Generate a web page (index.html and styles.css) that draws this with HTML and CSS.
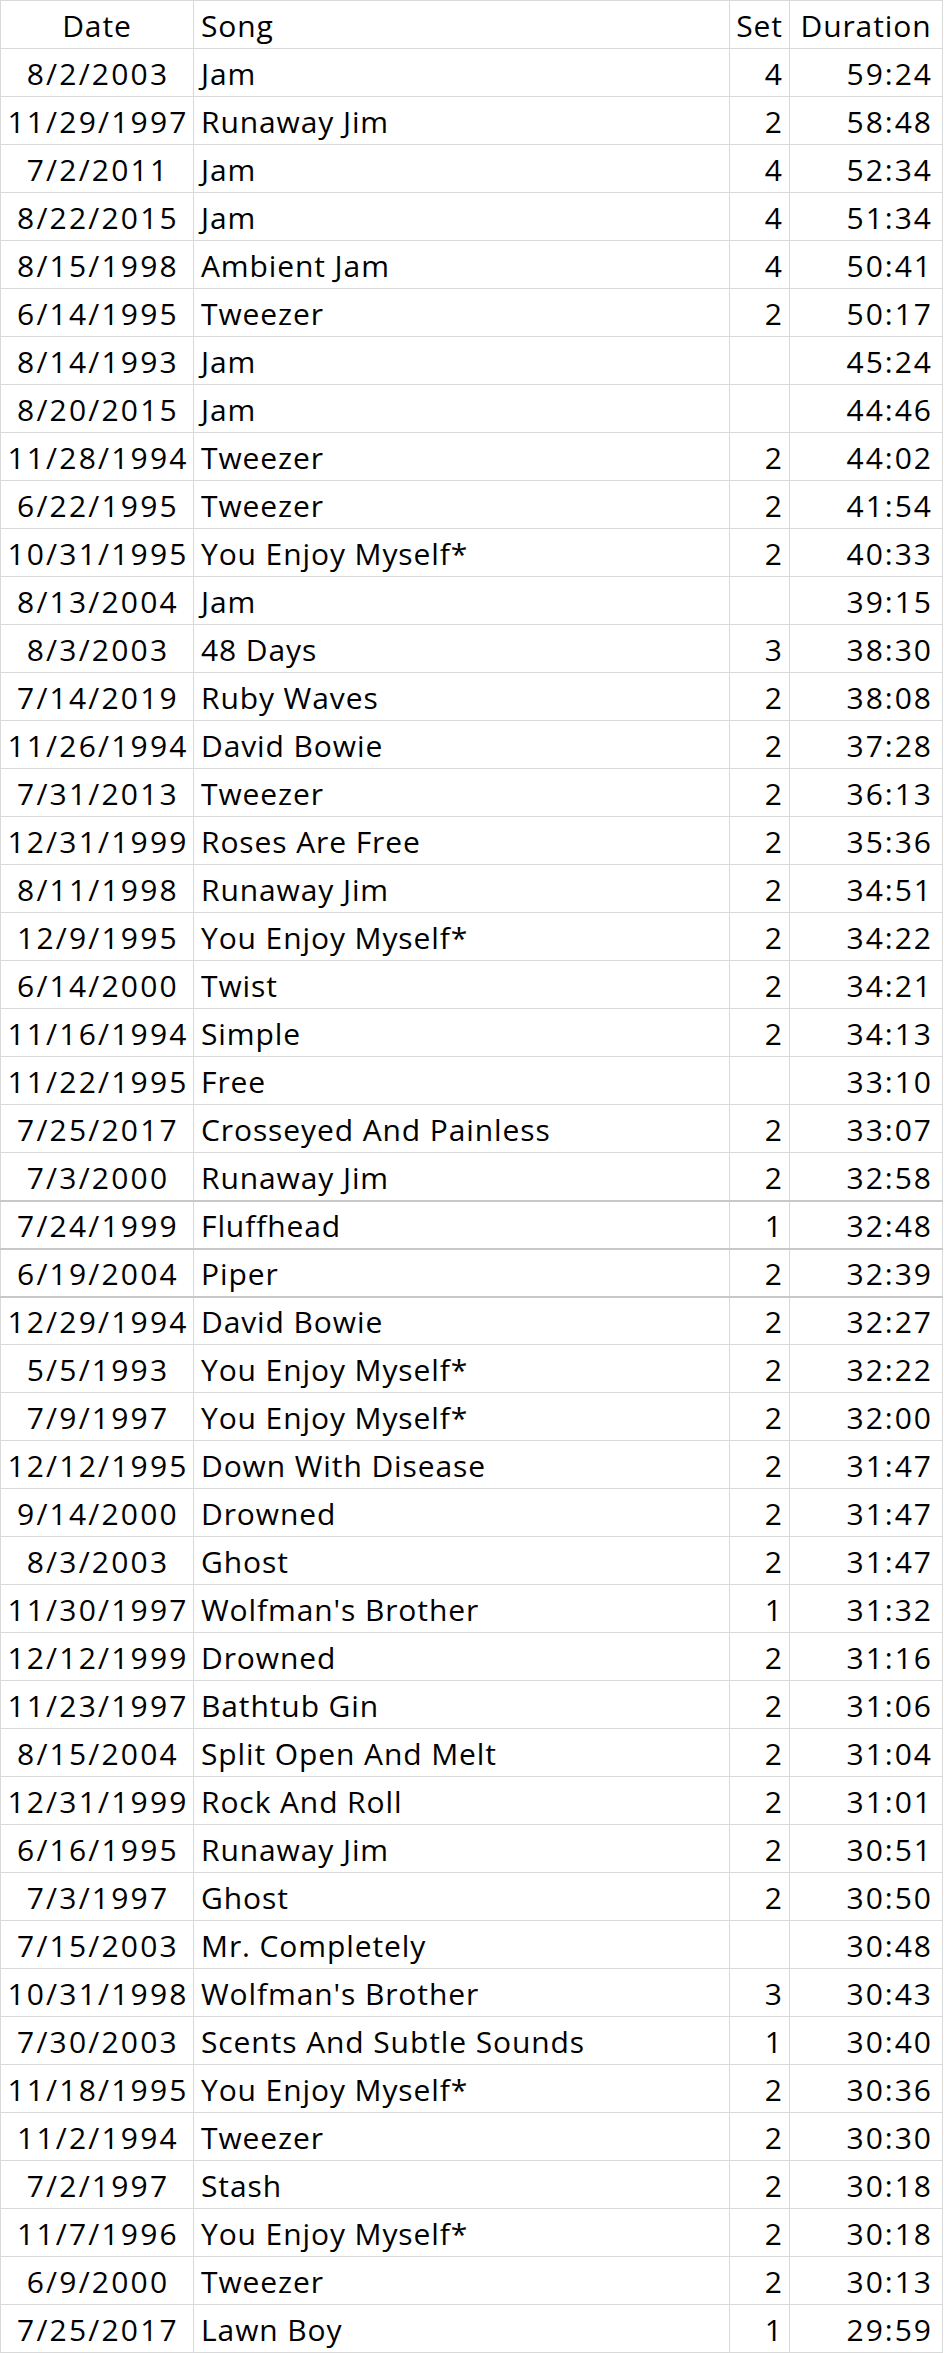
FILE: index.html
```html
<!DOCTYPE html>
<html>
<head>
<meta charset="utf-8">
<link rel="stylesheet" href="styles.css">
</head>
<body>
<div class="sheet">
<div class="row head"><div class="c date">Date</div><div class="c song">Song</div><div class="c set">Set</div><div class="c dur">Duration</div></div>
<div class="row"><div class="c date">8/2/2003</div><div class="c song">Jam</div><div class="c set">4</div><div class="c dur">59:24</div></div>
<div class="row"><div class="c date">11/29/1997</div><div class="c song">Runaway Jim</div><div class="c set">2</div><div class="c dur">58:48</div></div>
<div class="row"><div class="c date">7/2/2011</div><div class="c song">Jam</div><div class="c set">4</div><div class="c dur">52:34</div></div>
<div class="row"><div class="c date">8/22/2015</div><div class="c song">Jam</div><div class="c set">4</div><div class="c dur">51:34</div></div>
<div class="row"><div class="c date">8/15/1998</div><div class="c song">Ambient Jam</div><div class="c set">4</div><div class="c dur">50:41</div></div>
<div class="row"><div class="c date">6/14/1995</div><div class="c song">Tweezer</div><div class="c set">2</div><div class="c dur">50:17</div></div>
<div class="row"><div class="c date">8/14/1993</div><div class="c song">Jam</div><div class="c set"></div><div class="c dur">45:24</div></div>
<div class="row"><div class="c date">8/20/2015</div><div class="c song">Jam</div><div class="c set"></div><div class="c dur">44:46</div></div>
<div class="row"><div class="c date">11/28/1994</div><div class="c song">Tweezer</div><div class="c set">2</div><div class="c dur">44:02</div></div>
<div class="row"><div class="c date">6/22/1995</div><div class="c song">Tweezer</div><div class="c set">2</div><div class="c dur">41:54</div></div>
<div class="row"><div class="c date">10/31/1995</div><div class="c song">You Enjoy Myself*</div><div class="c set">2</div><div class="c dur">40:33</div></div>
<div class="row"><div class="c date">8/13/2004</div><div class="c song">Jam</div><div class="c set"></div><div class="c dur">39:15</div></div>
<div class="row"><div class="c date">8/3/2003</div><div class="c song">48 Days</div><div class="c set">3</div><div class="c dur">38:30</div></div>
<div class="row"><div class="c date">7/14/2019</div><div class="c song">Ruby Waves</div><div class="c set">2</div><div class="c dur">38:08</div></div>
<div class="row"><div class="c date">11/26/1994</div><div class="c song">David Bowie</div><div class="c set">2</div><div class="c dur">37:28</div></div>
<div class="row"><div class="c date">7/31/2013</div><div class="c song">Tweezer</div><div class="c set">2</div><div class="c dur">36:13</div></div>
<div class="row"><div class="c date">12/31/1999</div><div class="c song">Roses Are Free</div><div class="c set">2</div><div class="c dur">35:36</div></div>
<div class="row"><div class="c date">8/11/1998</div><div class="c song">Runaway Jim</div><div class="c set">2</div><div class="c dur">34:51</div></div>
<div class="row"><div class="c date">12/9/1995</div><div class="c song">You Enjoy Myself*</div><div class="c set">2</div><div class="c dur">34:22</div></div>
<div class="row"><div class="c date">6/14/2000</div><div class="c song">Twist</div><div class="c set">2</div><div class="c dur">34:21</div></div>
<div class="row"><div class="c date">11/16/1994</div><div class="c song">Simple</div><div class="c set">2</div><div class="c dur">34:13</div></div>
<div class="row"><div class="c date">11/22/1995</div><div class="c song">Free</div><div class="c set"></div><div class="c dur">33:10</div></div>
<div class="row"><div class="c date">7/25/2017</div><div class="c song">Crosseyed And Painless</div><div class="c set">2</div><div class="c dur">33:07</div></div>
<div class="row"><div class="c date">7/3/2000</div><div class="c song">Runaway Jim</div><div class="c set">2</div><div class="c dur">32:58</div></div>
<div class="row thick"><div class="c date">7/24/1999</div><div class="c song">Fluffhead</div><div class="c set">1</div><div class="c dur">32:48</div></div>
<div class="row thick"><div class="c date">6/19/2004</div><div class="c song">Piper</div><div class="c set">2</div><div class="c dur">32:39</div></div>
<div class="row thick"><div class="c date">12/29/1994</div><div class="c song">David Bowie</div><div class="c set">2</div><div class="c dur">32:27</div></div>
<div class="row"><div class="c date">5/5/1993</div><div class="c song">You Enjoy Myself*</div><div class="c set">2</div><div class="c dur">32:22</div></div>
<div class="row"><div class="c date">7/9/1997</div><div class="c song">You Enjoy Myself*</div><div class="c set">2</div><div class="c dur">32:00</div></div>
<div class="row"><div class="c date">12/12/1995</div><div class="c song">Down With Disease</div><div class="c set">2</div><div class="c dur">31:47</div></div>
<div class="row"><div class="c date">9/14/2000</div><div class="c song">Drowned</div><div class="c set">2</div><div class="c dur">31:47</div></div>
<div class="row"><div class="c date">8/3/2003</div><div class="c song">Ghost</div><div class="c set">2</div><div class="c dur">31:47</div></div>
<div class="row"><div class="c date">11/30/1997</div><div class="c song">Wolfman's Brother</div><div class="c set">1</div><div class="c dur">31:32</div></div>
<div class="row"><div class="c date">12/12/1999</div><div class="c song">Drowned</div><div class="c set">2</div><div class="c dur">31:16</div></div>
<div class="row"><div class="c date">11/23/1997</div><div class="c song">Bathtub Gin</div><div class="c set">2</div><div class="c dur">31:06</div></div>
<div class="row"><div class="c date">8/15/2004</div><div class="c song">Split Open And Melt</div><div class="c set">2</div><div class="c dur">31:04</div></div>
<div class="row"><div class="c date">12/31/1999</div><div class="c song">Rock And Roll</div><div class="c set">2</div><div class="c dur">31:01</div></div>
<div class="row"><div class="c date">6/16/1995</div><div class="c song">Runaway Jim</div><div class="c set">2</div><div class="c dur">30:51</div></div>
<div class="row"><div class="c date">7/3/1997</div><div class="c song">Ghost</div><div class="c set">2</div><div class="c dur">30:50</div></div>
<div class="row"><div class="c date">7/15/2003</div><div class="c song">Mr. Completely</div><div class="c set"></div><div class="c dur">30:48</div></div>
<div class="row"><div class="c date">10/31/1998</div><div class="c song">Wolfman's Brother</div><div class="c set">3</div><div class="c dur">30:43</div></div>
<div class="row"><div class="c date">7/30/2003</div><div class="c song">Scents And Subtle Sounds</div><div class="c set">1</div><div class="c dur">30:40</div></div>
<div class="row"><div class="c date">11/18/1995</div><div class="c song">You Enjoy Myself*</div><div class="c set">2</div><div class="c dur">30:36</div></div>
<div class="row"><div class="c date">11/2/1994</div><div class="c song">Tweezer</div><div class="c set">2</div><div class="c dur">30:30</div></div>
<div class="row"><div class="c date">7/2/1997</div><div class="c song">Stash</div><div class="c set">2</div><div class="c dur">30:18</div></div>
<div class="row"><div class="c date">11/7/1996</div><div class="c song">You Enjoy Myself*</div><div class="c set">2</div><div class="c dur">30:18</div></div>
<div class="row"><div class="c date">6/9/2000</div><div class="c song">Tweezer</div><div class="c set">2</div><div class="c dur">30:13</div></div>
<div class="row"><div class="c date">7/25/2017</div><div class="c song">Lawn Boy</div><div class="c set">1</div><div class="c dur">29:59</div></div>
</div>
</body>
</html>
```
FILE: styles.css
```css
html, body {
  margin: 0;
  padding: 0;
  background: #ffffff;
}

.sheet {
  width: 943px;
  font-family: "Open Sans", "Noto Sans", sans-serif;
  font-size: 30px;
  color: #000000;
  border-bottom: 1px solid #d9d9d9;
}

.row {
  display: grid;
  grid-template-columns: 193px 536px 60px 154px;
  height: 48px;
  box-sizing: border-box;
  border-top: 1px solid #d9d9d9;
}

.row.thick {
  border-top: 2px solid #c8c8c8;
}

.c {
  box-sizing: border-box;
  padding-top: 3px;
  line-height: 43px;
  white-space: nowrap;
  overflow: hidden;
  border-left: 1px solid #d9d9d9;
}

.row.thick .c {
  padding-top: 2px;
}

.date {
  text-align: center;
  letter-spacing: 2.2px;
  padding-left: 2px;
}

.song {
  text-align: left;
  padding-left: 7px;
  letter-spacing: 0.9px;
}

.set {
  text-align: right;
  padding-right: 7px;
}

.dur {
  text-align: right;
  padding-right: 9px;
  letter-spacing: 2px;
  border-right: 1px solid #d9d9d9;
}

.head .date,
.head .song,
.head .set,
.head .dur {
  letter-spacing: 0.9px;
}

.head .set,
.head .dur {
  text-align: center;
  padding-left: 0;
  padding-right: 0;
}

.head .date {
  padding-left: 0;
}
```
